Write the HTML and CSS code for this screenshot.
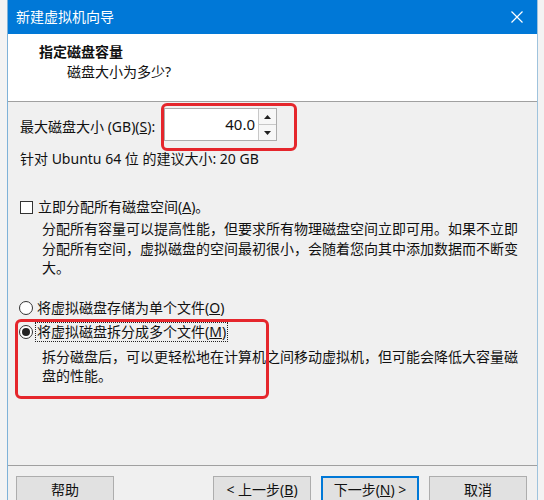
FILE: index.html
```html
<!DOCTYPE html>
<html lang="zh-CN">
<head>
<meta charset="utf-8">
<title>新建虚拟机向导</title>
<link rel="stylesheet" href="styles.css">
</head>
<body>
<div class="page">
  <div class="window">
    <div class="titlebar">
      <span class="title">新建虚拟机向导</span>
      <svg class="close" width="12" height="12" viewBox="0 0 12 12"><path d="M0.5 0.5 L11.5 11.5 M11.5 0.5 L0.5 11.5" stroke="#fff" stroke-width="1.2" fill="none"/></svg>
    </div>
    <div class="header">
      <div class="h-title">指定磁盘容量</div>
      <div class="h-sub">磁盘大小为多少?</div>
    </div>
    <div class="content">
      <div class="size-row">
        <span class="size-label">最大磁盘大小 (GB)(<u>S</u>):</span>
        <div class="spin">
          <div class="spin-value">40.0</div>
          <div class="spin-btns">
            <span class="spin-btn"><svg width="7" height="4" viewBox="0 0 7 4"><path d="M0 4 L3.5 0 L7 4 Z" fill="#222"/></svg></span>
            <span class="spin-btn"><svg width="7" height="4" viewBox="0 0 7 4"><path d="M0 0 L7 0 L3.5 4 Z" fill="#222"/></svg></span>
          </div>
        </div>
      </div>
      <div class="hint">针对 Ubuntu 64 位 的建议大小: 20 GB</div>
      <div class="option check-row"><span class="checkbox"></span><span class="opt-label">立即分配所有磁盘空间(<u>A</u>)。</span></div>
      <p class="desc">分配所有容量可以提高性能，但要求所有物理磁盘空间立即可用。如果不立即分配所有空间，虚拟磁盘的空间最初很小，会随着您向其中添加数据而不断变大。</p>
      <div class="option radio-row first"><span class="radio"></span><span class="opt-label">将虚拟磁盘存储为单个文件(<u>O</u>)</span></div>
      <div class="option radio-row"><span class="radio checked"></span><span class="opt-label focus">将虚拟磁盘拆分成多个文件(<u>M</u>)</span></div>
      <p class="desc desc2">拆分磁盘后，可以更轻松地在计算机之间移动虚拟机，但可能会降低大容量磁盘的性能。</p>
    </div>
    <div class="footer">
      <button class="btn">帮助</button>
      <div class="spacer"></div>
      <button class="btn">&lt; 上一步(<u>B</u>)</button>
      <button class="btn primary">下一步(<u>N</u>) &gt;</button>
      <button class="btn">取消</button>
    </div>
  </div>
  <div class="mark mark-size"></div>
  <div class="mark mark-split"></div>
</div>
</body>
</html>
```
FILE: styles.css
```css
* { box-sizing: border-box; }
html, body {
  margin: 0;
  padding: 0;
  height: 500px;
  overflow: hidden;
  background: #f3f3f3;
}
body {
  font-family: "Noto Sans", "Noto Sans CJK SC", sans-serif;
  font-size: 14px;
  color: #111;
}
.page {
  position: relative;
  width: 544px;
  height: 500px;
}
.window {
  margin-left: 7px;
  width: 531px;
  height: 520px;
  border-left: 1px solid #7fb2d8;
  border-right: 1px solid #9fc3dd;
  background: #f0f0f0;
}
.titlebar {
  height: 34px;
  background: #0078d7;
  display: flex;
  align-items: center;
  padding: 0 14px 0 8px;
  color: #fff;
}
.title {
  flex: 1;
  line-height: 34px;
}
.close { display: block; }
.header {
  height: 68px;
  background: #fff;
  border-bottom: 1px solid #a0a0a0;
  padding: 8px 0 0 31px;
}
.h-title {
  font-weight: bold;
  line-height: 20px;
}
.h-sub {
  line-height: 20px;
  padding-left: 28px;
}
.content {
  height: 363px;
  padding: 6px 12px 0 12px;
}
.size-row {
  display: flex;
  align-items: center;
  height: 33px;
}
.size-label {
  width: 144px;
  line-height: 19px;
  padding-top: 4px;
}
.spin {
  display: flex;
  width: 113px;
  height: 33px;
  border: 1px solid #adadad;
  background: #fff;
}
.spin-value {
  flex: 1;
  text-align: right;
  line-height: 31px;
  padding-right: 3px;
  font-size: 15px;
}
.spin-btns {
  width: 18px;
  display: flex;
  flex-direction: column;
  border-left: 1px solid #c8c8c8;
}
.spin-btn {
  flex: 1;
  display: flex;
  align-items: center;
  justify-content: center;
  background: #f7f7f7;
}
.spin-btn + .spin-btn { border-top: 1px solid #c8c8c8; }
.spin-btn svg { display: block; }
.hint {
  margin-top: 8px;
  line-height: 19.5px;
}
.option {
  display: flex;
  align-items: center;
  height: 24px;
}
.check-row { margin-top: 26.5px; }
.checkbox {
  width: 13px;
  height: 13px;
  border: 1px solid #333;
  background: #fff;
  margin-right: 5px;
  flex: none;
}
.radio {
  width: 14px;
  height: 14px;
  border: 1px solid #333;
  border-radius: 50%;
  background: #fff;
  margin: 0 4px 0 -1px;
  flex: none;
  display: flex;
  align-items: center;
  justify-content: center;
}
.radio.checked::after {
  content: "";
  width: 8px;
  height: 8px;
  border-radius: 50%;
  background: #222;
}
.opt-label { line-height: 18px; }
.focus {
  outline: 1px dotted #222;
  outline-offset: 0;
  padding: 0 1px;
  margin-left: -1px;
}
.desc {
  margin: 0;
  padding-left: 22px;
  width: 502px;
  line-height: 19.5px;
}
.radio-row.first { margin-top: 18.5px; }
.desc2 { margin-top: 2.5px; }
.footer {
  border-top: 1px solid #a0a0a0;
  display: flex;
  align-items: flex-start;
  gap: 10px;
  padding: 10px 10px 0 8px;
  height: 60px;
}
.spacer { flex: 1; }
.btn {
  width: 98px;
  height: 27px;
  font-family: inherit;
  font-size: 14px;
  color: #111;
  background: #e1e1e1;
  border: 1px solid #adadad;
  padding: 0;
  line-height: 24px;
}
.btn.primary {
  border: 1px solid #0078d7;
  box-shadow: inset 0 0 0 1px #0078d7;
}
.mark {
  position: absolute;
  border: 3px solid #e5262c;
  border-radius: 6px;
}
.mark-size {
  left: 161px;
  top: 103px;
  width: 136px;
  height: 48px;
}
.mark-split {
  left: 15px;
  top: 319px;
  width: 254px;
  height: 80px;
}
```
